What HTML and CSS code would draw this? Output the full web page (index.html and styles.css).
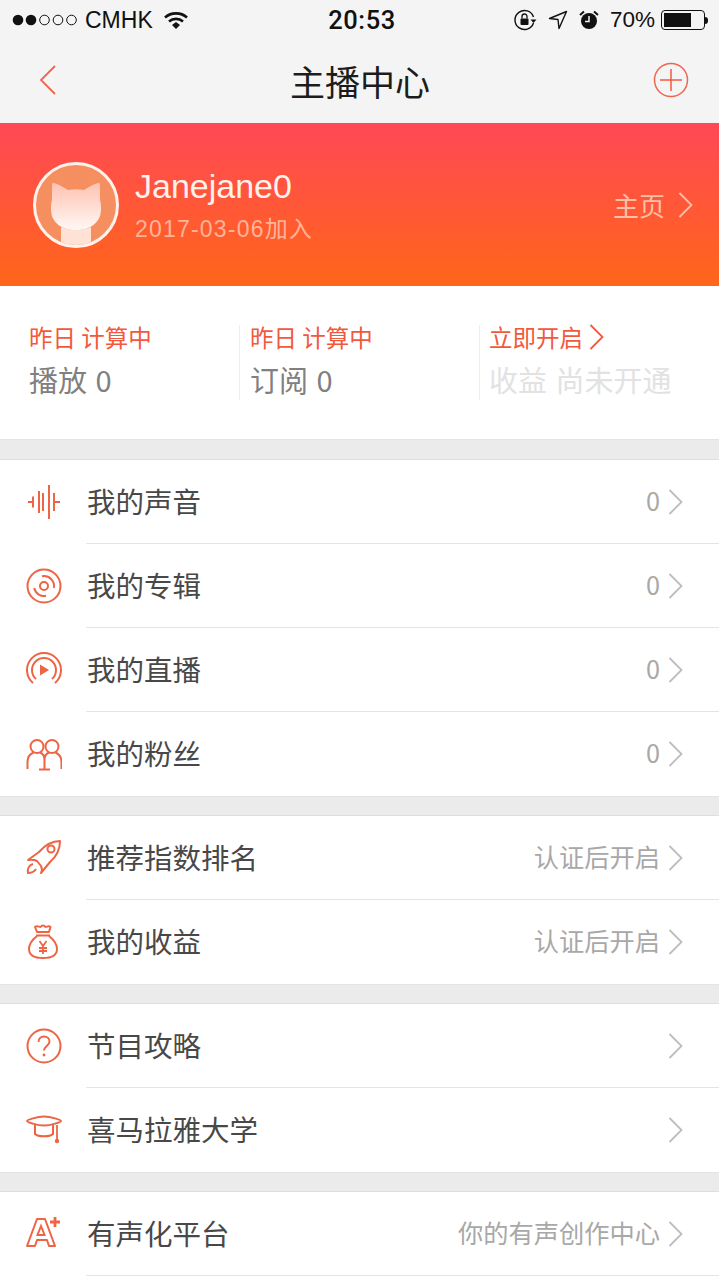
FILE: index.html
```html
<!DOCTYPE html>
<html lang="zh-CN">
<head>
  <meta charset="UTF-8">
  <meta name="viewport" content="width=device-width, initial-scale=1.0">
  <title>主播中心</title>
  <link rel="stylesheet" href="styles.css">
</head>
<body>

  <!-- Status bar -->
  <div class="status-bar">
    <div class="status-left">
      <svg class="signal" width="66" height="12" viewBox="0 0 66 12">
        <circle cx="6" cy="6" r="5.3" fill="#111"/>
        <circle cx="19" cy="6" r="5.3" fill="#111"/>
        <circle cx="32.500" cy="6" r="4.800" fill="none" stroke="#111"/>
        <circle cx="46" cy="6" r="4.800" fill="none" stroke="#111"/>
        <circle cx="59.500" cy="6" r="4.800" fill="none" stroke="#111"/>
      </svg>
      <span class="carrier">CMHK</span>
      <svg class="wifi" width="24" height="18" viewBox="0 0 24 18">
        <path d="M1 6.500C7 1 17 1 23 6.500" fill="none" stroke="#111" stroke-width="2.600"/>
        <path d="M5 10.500C9 7 15 7 19 10.500" fill="none" stroke="#111" stroke-width="2.600"/>
        <path d="M8 14l4-3 4 3-4 4z" fill="#111"/>
      </svg>
    </div>
    <div class="status-time">20:53</div>
    <div class="status-right">
      <svg width="23" height="22" viewBox="0 0 23 22">
        <path d="M19.500 14A9.500 9.500 0 1 1 19.500 8" fill="none" stroke="#111" stroke-width="1.400"/>
        <path d="M16.500 10.500h6l-3 3.500z" fill="#111"/>
        <rect x="6.500" y="9.500" width="8" height="6.500" rx="1" fill="#111"/>
        <path d="M8 9.500V7.500a2.500 2.500 0 0 1 5 0v2" fill="none" stroke="#111" stroke-width="1.300"/>
      </svg>
      <svg class="status-gap" width="20" height="20" viewBox="0 0 20 20">
        <path d="M1.500 8.500L18.500 1.500 11 18.500 10 9.500z" fill="none" stroke="#111" stroke-width="1.400" stroke-linejoin="round"/>
      </svg>
      <svg class="status-gap" width="20" height="20" viewBox="0 0 20 20">
        <circle cx="10" cy="11" r="8" fill="#111"/>
        <path d="M10 6v5.500H6" fill="none" stroke="#f4f4f4" stroke-width="1.500"/>
        <path d="M1 5l4-3.500M19 5l-4-3.500" stroke="#111" stroke-width="2"/>
      </svg>
      <span class="battery-text">70%</span>
      <div class="battery"><div class="battery-level"></div></div>
      <div class="battery-nub"></div>
    </div>
  </div>

  <!-- Nav -->
  <div class="nav-bar">
    <svg width="20" height="32" viewBox="0 0 20 32">
      <path d="M17 2L3 16l14 14" fill="none" stroke="#f0674f" stroke-width="1.800"/>
    </svg>
    <h1>主播中心</h1>
    <svg width="36" height="36" viewBox="0 0 36 36">
      <circle cx="18" cy="18" r="16.500" fill="none" stroke="#f0674f" stroke-width="1.500"/>
      <path d="M18 7v22M7 18h22" fill="none" stroke="#f25a3c" stroke-width="1.500"/>
    </svg>
  </div>

  <!-- Profile -->
  <div class="profile">
    <div class="avatar">
      <svg width="80" height="80" viewBox="0 0 80 80">
        <defs>
          <linearGradient id="catFill" x1="0" y1="0" x2="0" y2="1">
            <stop offset="0" stop-color="#ffc2b2"/>
            <stop offset="1" stop-color="#fff8f5"/>
          </linearGradient>
        </defs>
        <path d="M25 62c9 4 21 4 30 0v18H25z" fill="#ffe2d6"/>
        <path d="M17 18c4 0 10 4 15 7 5-1 11-1 16 0 5-3 11-7 15-7 1 0 1 1 1 2v15c1 3 1 6 1 9 0 14-11 21-25 21S15 58 15 44c0-3 0-6 1-9V20c0-1 0-2 1-2z" fill="url(#catFill)"/>
      </svg>
    </div>
    <div class="profile-info">
      <div class="profile-name">Janejane0</div>
      <div class="profile-date">2017-03-06加入</div>
    </div>
    <div class="profile-link">
      <span>主页</span>
      <svg width="15" height="26" viewBox="0 0 15 26">
        <path d="M1.500 1l12 12-12 12" fill="none" stroke="#ffc0a8" stroke-width="1.800"/>
      </svg>
    </div>
  </div>

  <!-- Stats -->
  <div class="stats">
    <div class="stat">
      <div class="stat-top">昨日 计算中</div>
      <div class="stat-bottom">播放 0</div>
    </div>
    <div class="stat">
      <div class="stat-top">昨日 计算中</div>
      <div class="stat-bottom">订阅 0</div>
    </div>
    <div class="stat">
      <div class="stat-top">
        <span>立即开启</span>
        <svg width="15" height="26" viewBox="0 0 15 26">
          <path d="M1.500 1l12 12-12 12" fill="none" stroke="#f2583c" stroke-width="1.800"/>
        </svg>
      </div>
      <div class="stat-bottom stat-off">收益 尚未开通</div>
    </div>
  </div>

  <div class="spacer spacer-first"></div>

  <div class="group">
    <div class="row">
      <svg class="row-icon" width="36" height="36" viewBox="0 0 36 36">
        <path d="M2 18h5M7 12.500v11M13 7v22M17 9v18M23 1v34M28 9v18M28 18h6" fill="none" stroke="#ee6444" stroke-width="2"/>
      </svg>
      <div class="row-body">
        <span class="row-title">我的声音</span>
        <span class="row-value">0</span>
        <svg class="chevron" width="15" height="26" viewBox="0 0 15 26"><path d="M1.500 1l12 12-12 12"/></svg>
      </div>
    </div>
    <div class="row">
      <svg class="row-icon" width="36" height="36" viewBox="0 0 36 36">
        <circle cx="18" cy="18" r="16.500" fill="none" stroke="#ee6444" stroke-width="2"/>
        <circle cx="18" cy="18" r="4" fill="none" stroke="#ee6444" stroke-width="2"/>
        <path d="M16 8.200A10 10 0 0 1 27.800 20M8.200 20A10 10 0 0 0 20 27.800" fill="none" stroke="#ee6444" stroke-width="2"/>
      </svg>
      <div class="row-body">
        <span class="row-title">我的专辑</span>
        <span class="row-value">0</span>
        <svg class="chevron" width="15" height="26" viewBox="0 0 15 26"><path d="M1.500 1l12 12-12 12"/></svg>
      </div>
    </div>
    <div class="row">
      <svg class="row-icon" width="36" height="36" viewBox="0 0 36 36">
        <path d="M7 31A17 17 0 1 1 29 31" fill="none" stroke="#ee6444" stroke-width="2"/>
        <path d="M10 27A12 12 0 1 1 26 27" fill="none" stroke="#ee6444" stroke-width="2"/>
        <path d="M14 12.500l9 5.500-9 5.500z" fill="#ee6444"/>
      </svg>
      <div class="row-body">
        <span class="row-title">我的直播</span>
        <span class="row-value">0</span>
        <svg class="chevron" width="15" height="26" viewBox="0 0 15 26"><path d="M1.500 1l12 12-12 12"/></svg>
      </div>
    </div>
    <div class="row">
      <svg class="row-icon" width="36" height="36" viewBox="0 0 36 36">
        <circle cx="11" cy="10.500" r="6.500" fill="none" stroke="#ee6444" stroke-width="2"/>
        <circle cx="26" cy="10.500" r="6.500" fill="none" stroke="#ee6444" stroke-width="2"/>
        <path d="M1.500 33v-7c0-5 2.500-8 6-9.500M35.500 33v-7c0-5-2.500-8-6-9.500M14 16.500c3 1 4.500 4 4.500 7.500v9M23 16.500c-3 1-4.500 4-4.500 7.500M13 33.500h11" fill="none" stroke="#ee6444" stroke-width="2"/>
      </svg>
      <div class="row-body">
        <span class="row-title">我的粉丝</span>
        <span class="row-value">0</span>
        <svg class="chevron" width="15" height="26" viewBox="0 0 15 26"><path d="M1.500 1l12 12-12 12"/></svg>
      </div>
    </div>
  </div>

  <div class="spacer"></div>

  <div class="group">
    <div class="row">
      <svg class="row-icon" width="36" height="36" viewBox="0 0 36 36">
        <path d="M34 1C26 1 19 5 13 12L2 20C6 19.500 9 20 11 21L15 26C16 28 16 31 15 33L24 22C31 16 34 9 34 1Z" fill="none" stroke="#ee6444" stroke-width="2" stroke-linejoin="round"/>
        <circle cx="25" cy="9" r="3.500" fill="none" stroke="#ee6444" stroke-width="2"/>
        <path d="M7 24C3 25 1 29 2 33C5 33 8 32 10 29" fill="none" stroke="#ee6444" stroke-width="2"/>
      </svg>
      <div class="row-body">
        <span class="row-title">推荐指数排名</span>
        <span class="row-value">认证后开启</span>
        <svg class="chevron" width="15" height="26" viewBox="0 0 15 26"><path d="M1.500 1l12 12-12 12"/></svg>
      </div>
    </div>
    <div class="row">
      <svg class="row-icon" width="36" height="36" viewBox="0 0 36 36">
        <path d="M11 8L9 3c2-2 4 0 5.500 0 1.500-2 3.500-2 5 0 1.500 0 3.500-2 5 0L23 8z" fill="none" stroke="#ee6444" stroke-width="2" stroke-linejoin="round"/>
        <path d="M10 11.500h14M11 12c-5 4-8 9-8 13 0 6 5 9 14 9s14-3 14-9c0-4-3-9-8-13" fill="none" stroke="#ee6444" stroke-width="2"/>
        <path d="M13.500 17l3.500 5 3.500-5M17 22v8M13 24h8M13 27h8" fill="none" stroke="#ee6444" stroke-width="1.800"/>
      </svg>
      <div class="row-body">
        <span class="row-title">我的收益</span>
        <span class="row-value">认证后开启</span>
        <svg class="chevron" width="15" height="26" viewBox="0 0 15 26"><path d="M1.500 1l12 12-12 12"/></svg>
      </div>
    </div>
  </div>

  <div class="spacer"></div>

  <div class="group">
    <div class="row">
      <svg class="row-icon" width="36" height="36" viewBox="0 0 36 36">
        <circle cx="18" cy="18" r="16.500" fill="none" stroke="#ee6444" stroke-width="2"/>
        <path d="M12.500 14c0-3.500 2.500-5.500 5.500-5.500s5.500 2 5.500 5c0 4-5 4.500-5.500 9" fill="none" stroke="#ee6444" stroke-width="2"/>
        <circle cx="18" cy="27" r="1.400" fill="#ee6444"/>
      </svg>
      <div class="row-body">
        <span class="row-title">节目攻略</span>
        <svg class="chevron" width="15" height="26" viewBox="0 0 15 26"><path d="M1.500 1l12 12-12 12"/></svg>
      </div>
    </div>
    <div class="row">
      <svg class="row-icon" width="36" height="36" viewBox="0 0 36 36">
        <path d="M1 9c0-1 10-4.500 17-4.500S35 8 35 9s-10 4.500-17 4.500S1 10 1 9z" fill="none" stroke="#ee6444" stroke-width="2"/>
        <path d="M9 12v10c3 3 15 3 18 0V12" fill="none" stroke="#ee6444" stroke-width="2"/>
        <path d="M31 13v14" fill="none" stroke="#ee6444" stroke-width="1.800"/>
        <circle cx="31" cy="29" r="2.200" fill="#ee6444"/>
      </svg>
      <div class="row-body">
        <span class="row-title">喜马拉雅大学</span>
        <svg class="chevron" width="15" height="26" viewBox="0 0 15 26"><path d="M1.500 1l12 12-12 12"/></svg>
      </div>
    </div>
  </div>

  <div class="spacer"></div>

  <div class="group">
    <div class="row">
      <svg class="row-icon" width="36" height="36" viewBox="0 0 36 36">
        <path d="M11 3h8l10 27h-6l-2-6h-10l-2 6H1z" fill="none" stroke="#ee6444" stroke-width="2" stroke-linejoin="round"/>
        <path d="M15 10l-3.500 9h7z" fill="none" stroke="#ee6444" stroke-width="2"/>
        <path d="M29 1v10M24 6h10" fill="none" stroke="#ee6444" stroke-width="2.800"/>
      </svg>
      <div class="row-body">
        <span class="row-title">有声化平台</span>
        <span class="row-value">你的有声创作中心</span>
        <svg class="chevron" width="15" height="26" viewBox="0 0 15 26"><path d="M1.500 1l12 12-12 12"/></svg>
      </div>
    </div>
  </div>

</body>
</html>
```

FILE: styles.css
```css
html {
  height: 1280px;
  overflow: hidden;
}

body {
  font-family: "Noto Sans CJK SC", "Liberation Sans", sans-serif;
  background-color: #fff;
  margin: 0;
  height: 1280px;
  overflow: hidden;
}

/* Status bar */
.status-bar {
  height: 40px;
  background-color: #f4f4f4;
  display: grid;
  grid-template-columns: 1fr auto 1fr;
  align-items: center;
  padding: 0 11px 0 12px;
  font-family: "Liberation Sans", sans-serif;
  color: #111;
}

.status-left,
.status-right {
  display: flex;
  align-items: center;
}

.status-right {
  justify-content: flex-end;
}

.carrier {
  font-size: 23px;
  margin-left: 7px;
}

.wifi {
  margin-left: 11px;
}

.status-time {
  font-family: Roboto, sans-serif;
  font-size: 25.500px;
  font-weight: 500;
  letter-spacing: 0.6px;
  margin-left: 4px;
}

.status-gap {
  margin-left: 11px;
}

.battery-text {
  font-size: 22.500px;
  margin-left: 11px;
}

.battery {
  width: 44px;
  height: 20px;
  box-sizing: border-box;
  border: 1px solid #111;
  border-radius: 4px;
  padding: 2px;
  margin-left: 6px;
}

.battery-level {
  width: 70%;
  height: 100%;
  background-color: #111;
}

.battery-nub {
  width: 3px;
  height: 7px;
  background-color: #111;
  border-radius: 0 3px 3px 0;
}

/* Nav */
.nav-bar {
  height: 83px;
  background-color: #f4f4f4;
  display: flex;
  align-items: center;
  padding: 0 30px 3px 38px;
  box-sizing: border-box;
}

.nav-bar h1 {
  flex: 1;
  margin: 0;
  padding-left: 9px;
  text-align: center;
  font-size: 35px;
  font-weight: normal;
  color: #1c1c1c;
}

/* Profile */
.profile {
  height: 163px;
  background: linear-gradient(180deg, #ff4856 0%, #ff6619 100%);
  display: flex;
  align-items: center;
  padding: 0 26px 0 33px;
}

.avatar {
  width: 86px;
  height: 86px;
  box-sizing: border-box;
  border: 3px solid #fff3ec;
  border-radius: 50%;
  overflow: hidden;
  background-color: #f68f5f;
}

.avatar svg {
  display: block;
}

.profile-info {
  flex: 1;
  margin-left: 16px;
}

.profile-name {
  font-family: "Liberation Sans", sans-serif;
  font-size: 34px;
  line-height: 40px;
  color: #fff2ec;
}

.profile-date {
  font-family: "Liberation Sans", "Noto Sans CJK SC", sans-serif;
  font-size: 23px;
  line-height: 30px;
  letter-spacing: 1.2px;
  margin-top: 8px;
  color: #ffb49a;
}

.profile-link {
  display: flex;
  align-items: center;
  gap: 13px;
  font-size: 26px;
  color: #ffc0a8;
}

/* Stats */
.stats {
  height: 153px;
  display: grid;
  grid-template-columns: 239px 240px 1fr;
  box-sizing: border-box;
  padding-top: 39px;
}

.stat {
  height: 75px;
  padding-left: 9px;
  border-left: 1px solid #eeeeee;
}

.stat:first-child {
  padding-left: 29px;
  border-left: none;
}

.stat:nth-child(2) {
  padding-left: 10px;
}

.stat-top {
  display: flex;
  align-items: center;
  gap: 6px;
  height: 28px;
  margin-top: -2px;
  font-size: 23.500px;
  color: #f2583c;
}

.stat-bottom {
  font-size: 29px;
  line-height: 40px;
  margin-top: 8px;
  word-spacing: 2px;
  color: #808080;
}

.stat-off {
  color: #e2e2e2;
}

.spacer {
  height: 20px;
  box-sizing: border-box;
  background-color: #ebebeb;
  border-top: 1px solid #e4e4e4;
  border-bottom: 1px solid #dedede;
}

.spacer-first {
  height: 21px;
}

/* Rows */
.row {
  height: 84px;
  display: flex;
  align-items: center;
  padding-left: 26px;
}

.row-icon {
  flex-shrink: 0;
}

.row-body {
  flex: 1;
  height: 100%;
  margin-left: 24px;
  padding-right: 36px;
  display: flex;
  align-items: center;
  border-bottom: 1px solid #e4e4e4;
  box-sizing: border-box;
}

.group .row:last-child .row-body {
  border-bottom: none;
}

.group:last-child .row:last-child .row-body {
  border-bottom: 1px solid #e4e4e4;
}

.row-title {
  flex: 1;
  padding-left: 1px;
  margin-bottom: 3px;
  font-size: 28.500px;
  color: #484848;
}

.row-value {
  font-size: 25.250px;
  color: #a8a8a8;
  margin-right: 8px;
  margin-bottom: 4px;
}

.chevron {
  fill: none;
  stroke: #bdbdbd;
  stroke-width: 1.800;
}
```
